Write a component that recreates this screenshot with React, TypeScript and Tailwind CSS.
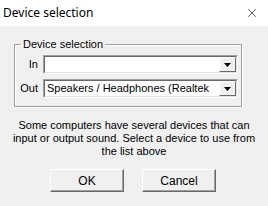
import { X } from 'lucide-react';

function Combo({ value }: { value: string }) {
  return (
    <div className="flex-1 h-[19px] flex border border-t-[#a0a0a0] border-l-[#a0a0a0] border-b-white border-r-white">
      <div className="flex-1 flex border border-t-[#696969] border-l-[#696969] border-b-[#e3e3e3] border-r-[#e3e3e3] bg-white">
        <span className="flex-1 pl-[2px] leading-[15px] text-[11px] text-black whitespace-nowrap overflow-hidden">{value}</span>
        <div className="w-[17px] h-[15px] flex items-center justify-center bg-[#f0f0f0] border border-t-white border-l-white border-b-[#696969] border-r-[#696969]">
          <svg width="7" height="4" viewBox="0 0 7 4">
            <path d="M0 0h7L3.5 4z" fill="#000" />
          </svg>
        </div>
      </div>
    </div>
  );
}

function Button({ label }: { label: string }) {
  return (
    <button className="w-[74px] h-[23px] bg-[#f0f0f0] text-[12px] text-black border border-t-white border-l-white border-b-[#696969] border-r-[#696969] shadow-[inset_-1px_-1px_0_#a0a0a0]">
      {label}
    </button>
  );
}

export default function App() {
  return (
    <div className="w-[268px] h-[206px] bg-[#f0f0f0] flex flex-col font-['Liberation_Sans',Arial,sans-serif] overflow-hidden">
      {/* Title bar */}
      <div className="h-[26px] bg-white flex items-center justify-between pl-[3px] pr-[9px]">
        <span className="text-[12px] text-black font-['Noto_Sans',sans-serif]">Device selection</span>
        <X className="w-[14px] h-[14px] text-black" strokeWidth={1.1} />
      </div>

      {/* Group box */}
      <fieldset className="mt-[12px] ml-[14px] w-[228px] h-[69px] border border-[#a0a0a0] shadow-[1px_1px_0_white,inset_1px_1px_0_white] px-[3px] pb-[8px]">
        <legend className="ml-[3px] px-[2px] text-[11px] leading-[13px] text-black">Device selection</legend>
        <div className="flex flex-col gap-[5px] mt-[4px]">
          <div className="flex items-center">
            <span className="w-[25px] text-right pr-[5px] text-[11px] text-black">In</span>
            <Combo value="" />
          </div>
          <div className="flex items-center">
            <span className="w-[25px] text-right pr-[5px] text-[11px] text-black">Out</span>
            <Combo value="Speakers / Headphones (Realtek" />
          </div>
        </div>
      </fieldset>

      {/* Description */}
      <p className="mt-[12px] px-[8px] text-center text-[11px] leading-[13px] text-black">
        Some computers have several devices that can input or output sound. Select a device to use from the list above
      </p>

      {/* Buttons */}
      <div className="mt-[11px] flex gap-[18px] pl-[50px]">
        <Button label="OK" />
        <Button label="Cancel" />
      </div>
    </div>
  );
}
